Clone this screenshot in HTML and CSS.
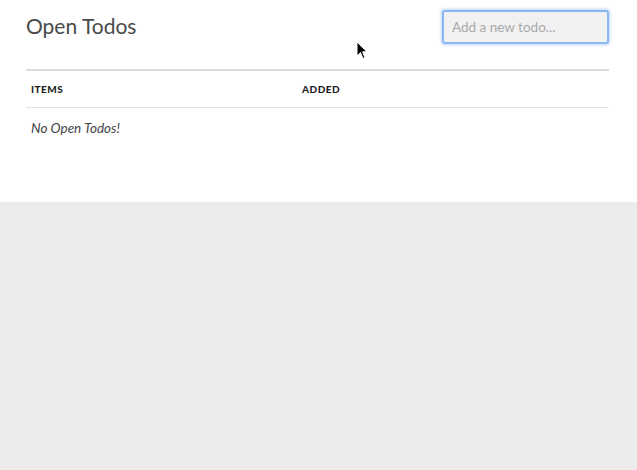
FILE: index.html
```
<!DOCTYPE html>
<html>
<head>
<meta charset="utf-8">
<link rel="stylesheet" href="styles.css">
</head>
<body>
<div class="panel">
  <div class="header">
    <h1 class="title">Open Todos</h1>
    <input class="new-todo" type="text" placeholder="Add a new todo...">
  </div>
  <table class="todos">
    <thead>
      <tr><th class="col-items">Items</th><th>Added</th></tr>
    </thead>
    <tbody>
      <tr><td class="empty" colspan="2">No Open Todos!</td></tr>
    </tbody>
  </table>
</div>
<svg class="cursor" width="12" height="19" viewBox="0 0 12 19"><path d="M1 1 L1 15 L4.5 11.5 L7 17.5 L9 16.6 L6.6 10.8 L11 10.8 Z" fill="#000" stroke="#fff" stroke-width="1"/></svg>
</body>
</html>
```
FILE: styles.css
```
html, body {
  margin: 0;
  padding: 0;
  background: #ececec;
  font-family: Lato, "Open Sans", sans-serif;
}
.panel {
  background: #fff;
  height: 202px;
  padding: 0 28px 0 26px;
  box-shadow: 0 1px 3px rgba(0,0,0,0.4);
  position: relative;
}
.header {
  display: flex;
  justify-content: space-between;
  align-items: flex-start;
  height: 69px;
}
.title {
  margin: 13px 0 0 0;
  font-size: 21px;
  font-weight: 400;
  color: #4a4a4a;
  line-height: 26px;
}
.new-todo {
  margin-top: 10px;
  box-sizing: border-box;
  width: 167px;
  height: 34px;
  border: 2px solid #8bb8f2;
  border-radius: 3px;
  box-shadow: 0 0 3px 1px rgba(100,160,240,0.45);
  background: #f1f1f1;
  padding: 0 8px;
  font-family: Lato, sans-serif;
  font-size: 13.5px;
  outline: none;
}
.new-todo::placeholder {
  color: #a9a9a9;
}
.todos {
  width: 100%;
  border-collapse: collapse;
  border-top: 2px solid #dcdcdc;
}
.todos th {
  text-align: left;
  text-transform: uppercase;
  font-size: 10px;
  font-weight: 900;
  letter-spacing: 0.5px;
  color: #1e1e1e;
  height: 35px;
  padding: 0 5px 1px;
  border-bottom: 1px solid #e3e3e3;
}
.todos .col-items {
  width: 261px;
}
.todos td.empty {
  font-style: italic;
  font-size: 13.5px;
  color: #444;
  padding: 0 5px;
  height: 40px;
}
.cursor {
  position: absolute;
  left: 356px;
  top: 41px;
}
```
